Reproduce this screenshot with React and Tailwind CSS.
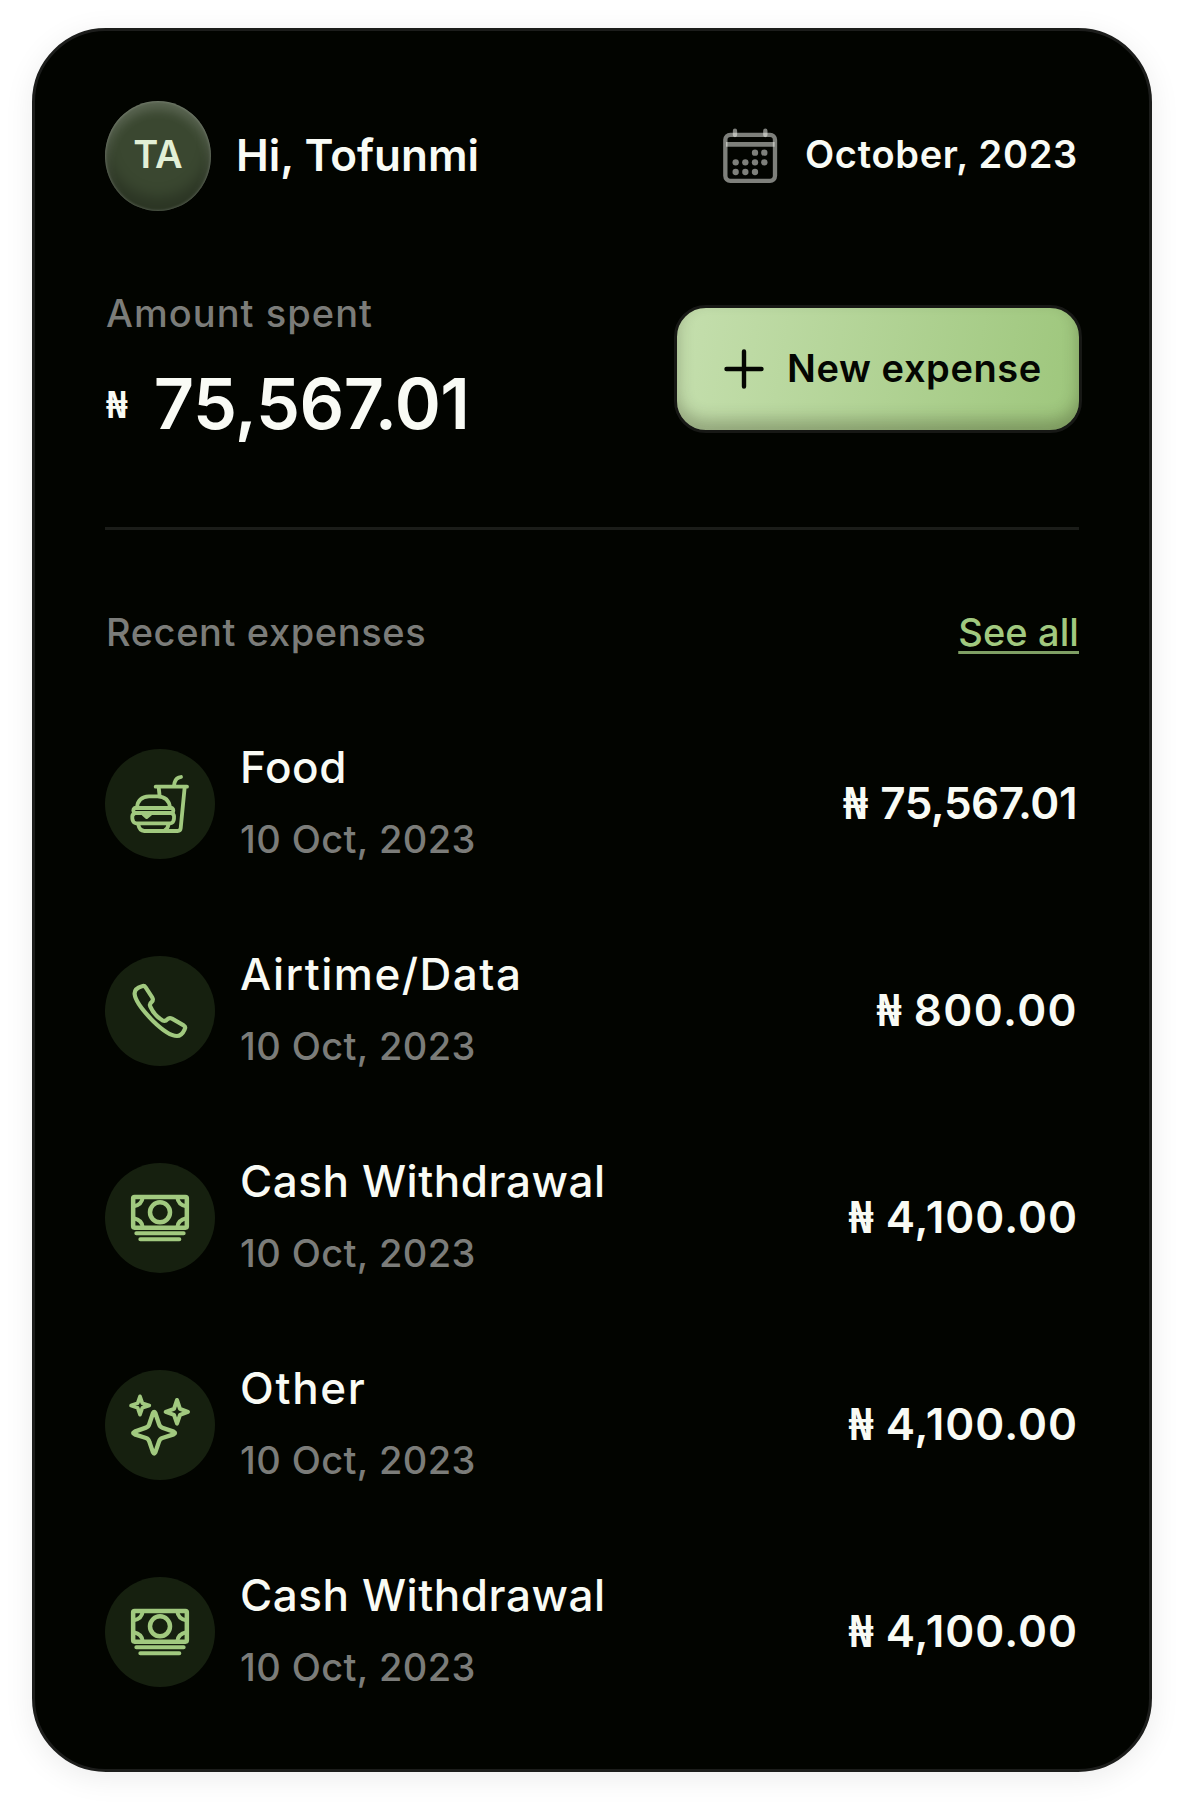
function FoodIcon() {
  return (
    <svg viewBox="-60 -63 330 330" className="size-full" fill="none" stroke="currentColor" strokeWidth="11.500" strokeLinecap="round" strokeLinejoin="round">
      <path d="M168 21 L161 23 Q149 27 147 48" />
      <path d="M92 50 H186" />
      <path d="M101 52 L103.500 74" />
      <path d="M179 52 L167 175 Q166 183 158 183 H58 Q43 182 40 164" />
      <path d="M130 164 Q129 177 118 182" />
      <path d="M36 112 Q39 80 72 79 H98 Q131 80 135 112" />
      <path d="M29 114 H141 Q149 121 141 129 H29 Q21 121 29 114 Z" />
      <path d="M29 130 Q20 133 22 146 Q23 159 34 160 H136 Q146 159 147 146 Q149 133 141 130" />
      <path d="M55 132 L65 141 L76 132" />
    </svg>
  );
}

function PhoneIcon() {
  return (
    <svg viewBox="45 48 330 330" className="size-full" fill="none" stroke="currentColor" strokeWidth="12.500" strokeLinecap="round" strokeLinejoin="round">
      <path d="M156 138.500 Q163 136 167 142 L187 173 Q191 180 185 186 Q177 192 181 200 Q192 226 217 241 Q226 245 232 238 Q238 232 246 236 L281 256 Q288 261 284 268 Q275 288 261 288 Q235 288 189 243 Q137 190 134 163 Q132 145 156 138.500 Z" />
    </svg>
  );
}

function CashIcon() {
  return (
    <svg viewBox="45 39 330 330" className="size-full" fill="none" stroke="currentColor" strokeWidth="13.500" strokeLinecap="round" strokeLinejoin="round">
      <rect x="129.500" y="141" width="161" height="92" rx="4" />
      <circle cx="210" cy="187" r="30" />
      <path d="M158 142 Q156 164 131 169 M262 142 Q264 164 289 169 M158 232 Q156 210 131 205 M262 232 Q264 210 289 205" strokeWidth="12" />
      <path d="M139 250 H281 M151 268 H268" strokeWidth="12" />
    </svg>
  );
}

function SparklesIcon() {
  return (
    <svg viewBox="45 44 330 330" className="size-full" fill="none" stroke="currentColor" strokeWidth="13" strokeLinecap="round" strokeLinejoin="round">
      <path d="M189 173 Q192.500 166 196 173 L207 206 Q209 214 217 217 L251 229 Q259 233 251 237 L217 248 Q209 251 207 259 L196 291 Q192.500 298 189 291 L178 259 Q176 251 168 248 L134 237 Q125 233 134 229 L168 217 Q176 214 178 206 Z" />
      <path d="M261 134 L270 160.500 L294 169.500 L270 178.500 L261 205 L252 178.500 L227 169.500 L252 160.500 Z" strokeWidth="12" />
      <path d="M150 123 L157 143.500 L178 150.500 L157 157.500 L150 178 L143 157.500 L123 150.500 L143 143.500 Z" strokeWidth="11" />
    </svg>
  );
}

function CalendarIcon() {
  const dots = [[120, 92], [148, 92], [62, 121], [91, 121], [120, 121], [148, 121], [62, 150], [91, 150], [120, 150]];
  return (
    <svg viewBox="0 0 210 210" className="mt-[2px] size-[70px] shrink-0 text-[#f9fbf5]/50" fill="none" stroke="currentColor" strokeWidth="13">
      <rect x="31" y="38.500" width="149" height="138" rx="15" />
      <path d="M33 67 H179" strokeWidth="14" />
      <path d="M60 26 V39 M151 26 V39" strokeLinecap="round" />
      {dots.map(([x, y]) => (
        <circle key={`${x}-${y}`} cx={x} cy={y} r="9.5" fill="currentColor" stroke="none" />
      ))}
    </svg>
  );
}

const expenses = [
  { title: "Food", titleClass: "tracking-[0.6px]", amount: "75,567.01", amountClass: "tracking-[-0.5px]", Icon: FoodIcon },
  { title: "Airtime/Data", titleClass: "tracking-[1.5px]", amount: "800.00", amountClass: "tracking-[1.4px] -mr-[1px]", Icon: PhoneIcon },
  { title: "Cash Withdrawal", titleClass: "tracking-[0.55px]", amount: "4,100.00", amountClass: "tracking-[1px] -mr-[1px]", Icon: CashIcon },
  { title: "Other", titleClass: "tracking-[1.7px]", amount: "4,100.00", amountClass: "tracking-[1px] -mr-[1px]", Icon: SparklesIcon },
  { title: "Cash Withdrawal", titleClass: "tracking-[0.55px]", amount: "4,100.00", amountClass: "tracking-[1px] -mr-[1px]", Icon: CashIcon },
];

function ExpenseRow({ title, titleClass, amount, amountClass, Icon }) {
  return (
    <li className="flex h-[110px] items-center">
      <div className="size-[110px] shrink-0 rounded-full bg-[#16200f] text-[#a1c97f]">
        <Icon />
      </div>
      <div className="ml-[25px] flex flex-col gap-[26px] pb-[4px] whitespace-nowrap">
        <p className={`text-[44px] leading-[48px] font-medium text-[#f9fbf5] ${titleClass}`}>{title}</p>
        <p className="text-[38px] leading-[44px] font-[450] tracking-[0.4px] text-[#7b7c79]">10 Oct, 2023</p>
      </div>
      <p className="mr-[2px] ml-auto flex items-center gap-[12px] pb-[2px] text-[44px] leading-[48px] font-semibold text-[#f9fbf5]">
        <span className="pb-[2px] font-['Noto_Sans'] font-bold">₦</span>
        <span className={amountClass}>{amount}</span>
      </p>
    </li>
  );
}

export default function App() {
  return (
    <main className="h-[1808px] w-[1184px] bg-white px-[32px] pt-[28px] font-['Inter',sans-serif]">
      <div className="h-[1744px] rounded-[74px] border-[3px] border-[#1c1d1b] bg-[#020400] px-[70px] pt-[70px] shadow-[0_6px_30px_rgba(0,0,0,0.08)]">
        <header className="flex h-[110px] items-center justify-between">
          <div className="flex items-center">
            <div className="flex h-[110px] w-[106px] items-center justify-center rounded-[50%] bg-[#3a4730] pb-[3px] text-[38px] font-semibold text-[#e2efd6] shadow-[inset_0_0_3px_rgba(255,255,255,0.3),inset_0_8px_12px_rgba(255,255,255,0.18),inset_0_-14px_14px_rgba(0,0,0,0.25)]">
              TA
            </div>
            <h1 className="ml-[25px] pb-[2px] text-[44px] leading-[52px] font-semibold text-[#f9fbf5]">Hi, Tofunmi</h1>
          </div>
          <div className="flex items-center gap-[20px] pr-[1px]">
            <CalendarIcon />
            <span className="pb-[4px] text-[38px] leading-[46px] font-semibold tracking-[0.7px] text-[#f9fbf5]">October, 2023</span>
          </div>
        </header>

        <section className="mt-[80px] flex h-[148px] items-start justify-between">
          <div>
            <p className="pl-px text-[38px] leading-[44px] font-[450] tracking-[1.05px] text-[#7b7c79]">Amount spent</p>
            <p className="mt-[33px] flex items-center gap-[26px] pl-px leading-[70px] text-[#f9fbf5]">
              <span className="pb-[4px] font-['Noto_Sans'] text-[38px] font-bold">₦</span>
              <span className="pb-[3px] text-[70px] font-semibold tracking-[-0.5px]">75,567.01</span>
            </p>
          </div>
          <button className="mt-[14px] -mr-[3px] flex h-[128px] w-[408px] items-center rounded-[32px] border-[3px] border-[#171815] bg-linear-[100deg] from-[#c5dfae] to-[#9dc67b] bg-origin-border pl-[47px] text-[#040602] shadow-[inset_0_-10px_16px_rgba(40,40,20,0.3)]">
            <svg viewBox="0 0 40 40" className="size-[40px] shrink-0" fill="none" stroke="currentColor" strokeWidth="4.400" strokeLinecap="round">
              <path d="M20 2.500 V37.500 M2.500 20 H37.500" />
            </svg>
            <span className="ml-[23px] pb-[3px] text-[38px] leading-[46px] font-semibold tracking-[0.6px] whitespace-nowrap">New expense</span>
          </button>
        </section>

        <hr className="mt-[88px] h-[3px] border-0 bg-[#1b1d19]" />

        <div className="mt-[80px] flex h-[44px] items-center justify-between text-[38px] leading-[44px]">
          <h2 className="pl-px font-[450] tracking-[0.6px] text-[#7b7c79]">Recent expenses</h2>
          <a className="font-medium tracking-[0.1px] text-[#a1c97f] underline decoration-[#7f9f64] decoration-[3px] underline-offset-[5px]">See all</a>
        </div>

        <ul className="mt-[95px] flex flex-col gap-[97px]">
          {expenses.map((e, i) => (
            <ExpenseRow key={i} {...e} />
          ))}
        </ul>
      </div>
    </main>
  );
}
